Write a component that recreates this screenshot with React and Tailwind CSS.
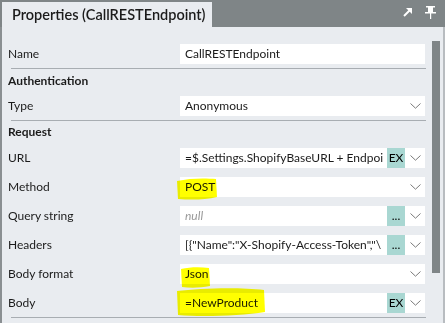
import React from "react";

const font = { fontFamily: "Lato, 'Open Sans', sans-serif" };

function Chevron() {
  return (
    <div className="w-[20px] shrink-0 h-full flex items-center justify-center">
      <svg width="11" height="6" viewBox="0 0 11 6">
        <polyline points="0.5,0.5 5.5,5.2 10.5,0.5" fill="none" stroke="#7a7a7a" strokeWidth="1" />
      </svg>
    </div>
  );
}

function Btn({ children }) {
  return (
    <div className="w-[18px] shrink-0 h-full bg-[#a9d7d2] flex items-center justify-center text-[12px] text-black leading-none">
      {children}
    </div>
  );
}

function Row({ label, children, h = "h-[29px]" }) {
  return (
    <div className={`flex ${h} items-center`}>
      <div className="w-[178px] shrink-0 pl-[6px] text-[12px] text-[#1b1b1b]">{label}</div>
      <div className="w-[245px] shrink-0 h-[20px] bg-white flex items-center">{children}</div>
    </div>
  );
}

function Val({ children, className = "" }) {
  return (
    <div className={`flex-1 min-w-0 overflow-hidden whitespace-nowrap pl-[5px] text-[12px] text-[#1b1b1b] ${className}`}>
      {children}
    </div>
  );
}

function Sep() {
  return <div className="ml-[9px] w-[415px] h-[1px] bg-[#a8adb2]" />;
}

function Heading({ children, h }) {
  return (
    <div className={`flex items-center ${h} pl-[6px] text-[12px] font-bold text-[#1b1b1b]`}>{children}</div>
  );
}

export default function App() {
  return (
    <div className="relative w-[445px] h-[323px] overflow-hidden bg-[#e9ecf0] flex flex-col" style={font}>
      <div className="h-[27px] shrink-0 bg-[#7f8587] flex pl-[2px] pt-[2px]">
        <div className="w-[210px] shrink-0 h-[25px] bg-[#e9ecf0] flex items-center pl-[10px] whitespace-nowrap text-[14.5px] font-semibold text-[#1b1b1b]">
          Properties (CallRESTEndpoint)
        </div>
        <div className="ml-auto flex items-start pt-[4px] pr-[9px] gap-[12px]">
          <svg width="10" height="10" viewBox="0 0 10 10" className="mt-[1px]">
            <line x1="1" y1="9" x2="7" y2="3" stroke="white" strokeWidth="2" />
            <polygon points="3,1 9,1 9,7" fill="white" />
          </svg>
          <svg width="11" height="13" viewBox="0 0 11 13">
            <rect x="1" y="0" width="9" height="1.5" fill="white" />
            <rect x="3" y="1" width="5" height="5.5" fill="white" />
            <rect x="0" y="6" width="11" height="1.5" fill="white" />
            <rect x="5" y="7" width="1.2" height="6" fill="white" />
          </svg>
        </div>
      </div>
      <div className="flex flex-1">
        <div className="w-[2px] bg-[#8a8f92]" />
        <div className="w-[424px] pt-[12px]">
          <Row label="Name">
            <Val>CallRESTEndpoint</Val>
          </Row>
          <Sep />
          <Heading h="h-[23px]">Authentication</Heading>
          <Row label="Type" h="h-[28px]">
            <Val className="pl-[4px]">Anonymous</Val>
            <Chevron />
          </Row>
          <Sep />
          <Heading h="h-[22px]">Request</Heading>
          <Row label="URL">
            <Val>=$.Settings.ShopifyBaseURL + Endpoi</Val>
            <Btn>EX</Btn>
            <Chevron />
          </Row>
          <Row label="Method">
            <Val>POST</Val>
            <Chevron />
          </Row>
          <Row label="Query string">
            <Val className="italic text-[#9a9a9a]">null</Val>
            <Btn>...</Btn>
            <Chevron />
          </Row>
          <Row label="Headers">
            <Val>{'[{"Name":"X-Shopify-Access-Token","\\'}</Val>
            <Btn>...</Btn>
            <Chevron />
          </Row>
          <Row label="Body format">
            <Val>Json</Val>
            <Chevron />
          </Row>
          <Row label="Body">
            <Val>=NewProduct</Val>
            <Btn>EX</Btn>
            <Chevron />
          </Row>
          <Sep />
        </div>
        <div className="w-[6px]" />
        <div className="w-[8px] pt-[14px]">
          <div className="h-[232px] bg-[#7f8587]" />
        </div>
        <div className="w-[3px]" />
        <div className="w-[2px] bg-[#b8bcc0]" />
      </div>
      <svg className="absolute left-0 top-0 mix-blend-multiply pointer-events-none" width="445" height="323" viewBox="0 0 445 323">
        <path d="M177 181 C190 178 205 178 216 179 L217 197 C205 200 190 200 178 199 Z" fill="#ffff00" />
        <path d="M181 269 C190 267 200 267 209 268 L210 286 C200 288 190 288 182 287 Z" fill="#ffff00" />
        <path d="M177 291 C200 288 240 287 264 290 L265 312 C240 316 200 317 178 315 Z" fill="#ffff00" />
      </svg>
    </div>
  );
}
